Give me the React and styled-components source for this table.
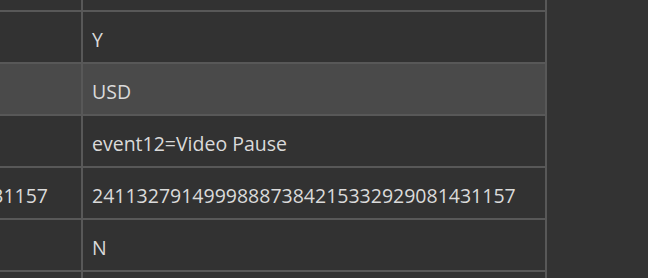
import React from 'react';
import styled, { createGlobalStyle } from 'styled-components';

const GlobalStyle = createGlobalStyle`
    html, body {
        margin: 0;
        padding: 0;
        background: #323232;
    }
    body {
        font-family: "Open Sans", "Noto Sans", sans-serif;
        -webkit-font-smoothing: antialiased;
    }
    * {
        box-sizing: border-box;
    }
`;

const rows = [
    { left: '', value: '', partial: true },
    { left: '', value: 'Y' },
    { left: '', value: 'USD', selected: true },
    { left: '', value: 'event12=Video Pause' },
    { left: '24113279149998887384215332929081431157', value: '24113279149998887384215332929081431157' },
    { left: '', value: 'N' },
    { left: '', value: '' },
];

const Page = styled.div`
    display: flex;
    width: 648px;
    height: 278px;
    overflow: hidden;
    background: #333333;
`;

const Table = styled.div`
    display: grid;
    grid-template-columns: 83px 464px;
    align-content: start;
    flex: none;
`;

const Cell = styled.div`
    display: flex;
    align-items: center;
    min-width: 0;
    height: ${p => (p.$partial ? '12px' : '52px')};
    padding: ${p => (p.$partial ? '0' : '5px 9px 0 9px')};
    background: ${p => (p.$selected ? '#4a4a4a' : '#323232')};
    border-bottom: 2px solid #585858;
    border-right: 2px solid #585858;
    color: #dadada;
    font-size: 19.5px;
    white-space: nowrap;
    overflow: hidden;
`;

const KeyCell = styled(Cell)`
    justify-content: flex-end;
    padding-left: 0;
    padding-right: 33px;
`;

const ValueCell = styled(Cell)``;

const Filler = styled.div`
    flex: 1;
    background: #333333;
`;

export default function App() {
    return (
        <>
            <GlobalStyle />
            <Page>
                <Table>
                    {rows.map((r, i) => (
                        <React.Fragment key={i}>
                            <KeyCell $partial={r.partial} $selected={r.selected}>
                                <span>{r.left}</span>
                            </KeyCell>
                            <ValueCell $partial={r.partial} $selected={r.selected}>
                                <span>{r.value}</span>
                            </ValueCell>
                        </React.Fragment>
                    ))}
                </Table>
                <Filler />
            </Page>
        </>
    );
}
